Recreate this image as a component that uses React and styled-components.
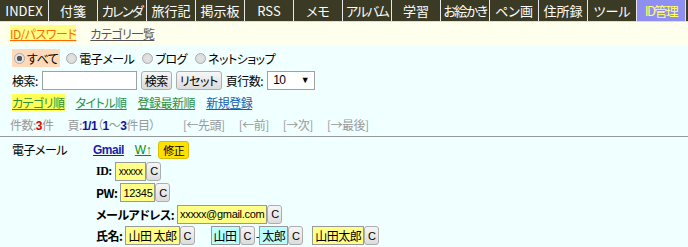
import styled, { createGlobalStyle } from "styled-components";

const GlobalStyle = createGlobalStyle`
  body {
    margin: 0;
    background: #f0ffff;
    font-family: "Noto Sans CJK JP", "Liberation Sans", sans-serif;
    font-size: 12px;
    font-feature-settings: "palt";
    letter-spacing: -0.5px;
    color: #000;
  }
`;

const Nav = styled.div`
  display: flex;
  height: 21px;
  background: #3b3b25;
  border-bottom: 1px solid #ddd;
`;
const Tab = styled.div`
  width: 48px;
  flex: none;
  border-right: 1px solid #e8e8e8;
  color: ${(p) => (p.active ? "#ffff66" : "#fff")};
  background: ${(p) => (p.active ? "#8f8ff2" : "transparent")};
  font-size: 13px;
  line-height: 21px;
  letter-spacing: ${(p) => (p.long ? "-1.6px" : "0")};
  text-align: center;
  white-space: nowrap;
  overflow: hidden;
`;

const SubBar = styled.div`
  display: flex;
  align-items: center;
  gap: 14px;
  height: 23px;
  padding-left: 10px;
  background: #ffffee;
`;
const SubLink = styled.a`
  text-decoration: underline;
  color: ${(p) => (p.active ? "#ff6a00" : "#555")};
  background: ${(p) => (p.active ? "#ffff88" : "transparent")};
`;

const Content = styled.div`
  padding: 2px 0 0 12px;
`;
const Row = styled.div`
  display: flex;
  align-items: center;
  gap: ${(p) => p.gap || 4}px;
  height: 22px;
  white-space: nowrap;
`;
const RadioOpt = styled.label`
  display: flex;
  align-items: center;
  gap: 2px;
  height: 18px;
  padding-right: 2px;
  background: ${(p) => (p.checked ? "#ffd9b8" : "transparent")};
`;
const Radio = styled.span`
  width: 11px;
  height: 11px;
  margin-left: 2px;
  border-radius: 50%;
  border: 1px solid #aaa;
  background: radial-gradient(circle, ${(p) =>
    p.checked ? "#555 0 2.5px, #e4e4e4 3px" : "#e4e4e4 0, #d8d8d8 100%"});
  box-sizing: border-box;
`;
const TextInput = styled.span`
  display: inline-block;
  width: ${(p) => p.w}px;
  height: 19px;
  background: #fff;
  border: 1px solid #a0a0a0;
  box-sizing: border-box;
`;
const Button = styled.span`
  display: inline-flex;
  align-items: center;
  justify-content: center;
  height: 19px;
  padding: 0 ${(p) => p.pad ?? 3}px;
  border: 1px solid #adadad;
  border-radius: 3px;
  background: linear-gradient(#f6f6f6, #dcdcdc);
  box-sizing: border-box;
`;
const Select = styled.span`
  display: inline-flex;
  align-items: center;
  justify-content: space-between;
  width: 48px;
  height: 19px;
  padding: 0 5px;
  background: #fff;
  border: 1px solid #a0a0a0;
  box-sizing: border-box;
  font-family: "Liberation Sans", sans-serif;
  font-size: 12px;
  & small {
    font-size: 9px;
  }
`;
const SortLink = styled.a`
  text-decoration: underline;
  color: ${(p) => p.color};
  background: ${(p) => p.bg || "transparent"};
`;
const Count = styled.div`
  display: flex;
  align-items: center;
  gap: 14px;
  height: 22px;
  margin-left: -2px;
  color: #999;
`;
const Num = styled.b`
  color: ${(p) => p.color};
  font-family: "Liberation Sans", sans-serif;
`;
const Rule = styled.hr`
  margin: 1px 0 0 0;
  border: none;
  border-top: 1px solid #999;
`;

const Record = styled.div`
  display: flex;
  padding-top: 3px;
`;
const RecordLabel = styled.div`
  width: 81px;
  padding-left: 12px;
  line-height: 19px;
`;
const RecordBody = styled.div`
  display: flex;
  flex-direction: column;
  gap: 2.5px;
`;
const Field = styled.div`
  display: flex;
  align-items: center;
  height: 19px;
  padding-left: 3px;
  white-space: nowrap;
`;
const TopField = styled(Field)`
  padding-left: 0;
`;
const FieldLabel = styled.b`
  margin-right: 3px;
  font-family: ${(p) => (p.serif ? '"Liberation Serif", serif' : "inherit")};
`;
const Value = styled.span`
  display: inline-flex;
  align-items: center;
  height: 19px;
  padding: 0 ${(p) => p.pad ?? 2}px;
  background: ${(p) => (p.cyan ? "#b8ffff" : "#ffff88")};
  border: 1px solid #999;
  box-sizing: border-box;
  font-size: ${(p) => p.fs || 12}px;
  font-family: ${(p) =>
    p.latin ? '"Liberation Sans", sans-serif' : "inherit"};
  letter-spacing: ${(p) => (p.latin ? "-0.3px" : "-0.5px")};
`;
const CopyBtn = styled(Button)`
  width: 15px;
  padding: 0;
  margin-right: ${(p) => p.after || 0}px;
  font-family: "Liberation Sans", sans-serif;
  font-size: 11px;
`;
const Gmail = styled.a`
  color: #1c1ca8;
  font-weight: bold;
  text-decoration: underline;
  font-family: "Liberation Sans", sans-serif;
`;
const Up = styled.a`
  color: #0a8a0a;
  text-decoration: underline;
  margin-left: 11px;
  font-family: "Liberation Sans", sans-serif;
`;
const EditBtn = styled.span`
  display: inline-flex;
  align-items: center;
  height: 16px;
  margin-left: 7px;
  padding: 0 4px;
  background: #ffe100;
  border: 1px solid #d8bd00;
  border-radius: 3px;
  font-size: 11px;
`;

const tabs = [
  "INDEX", "付箋", "カレンダ", "旅行記", "掲示板", "RSS", "メモ",
  "アルバム", "学習", "お絵かき", "ペン画", "住所録", "ツール", "ID管理",
];

export default function App() {
  return (
    <>
      <GlobalStyle />
      <Nav>
        {tabs.map((t) => (
          <Tab key={t} active={t === "ID管理"} long={t.length >= 4 && t !== "INDEX"}>
            {t}
          </Tab>
        ))}
      </Nav>
      <SubBar>
        <SubLink active>ID/パスワード</SubLink>
        <SubLink>カテゴリ一覧</SubLink>
      </SubBar>
      <Content>
        <Row gap={4}>
          <RadioOpt checked><Radio checked />すべて</RadioOpt>
          <RadioOpt><Radio />電子メール</RadioOpt>
          <RadioOpt><Radio />ブログ</RadioOpt>
          <RadioOpt><Radio />ネットショップ</RadioOpt>
        </Row>
        <Row gap={4}>
          <span>検索:</span>
          <TextInput w={95} />
          <Button>検索</Button>
          <Button>リセット</Button>
          <span>頁行数:</span>
          <Select>10<small>▼</small></Select>
        </Row>
        <Row gap={11}>
          <SortLink color="#2f8f3f" bg="#ffff55">カテゴリ順</SortLink>
          <SortLink color="#2f8f3f">タイトル順</SortLink>
          <SortLink color="#2f8f3f">登録最新順</SortLink>
          <SortLink color="#1060b0">新規登録</SortLink>
        </Row>
        <Count>
          <span>件数:<Num color="#e00000">3</Num>件</span>
          <span>
            頁:<Num color="#1010a0">1/1</Num>（<Num color="#1010a0">1</Num>～<Num color="#1010a0">3</Num>件目）
          </span>
          <span style={{ marginLeft: 14 }}>[←先頭]</span>
          <span>[←前]</span>
          <span>[→次]</span>
          <span>[→最後]</span>
        </Count>
      </Content>
      <Rule />
      <Record>
        <RecordLabel>電子メール</RecordLabel>
        <RecordBody>
          <TopField>
            <Gmail>Gmail</Gmail>
            <Up>W↑</Up>
            <EditBtn>修正</EditBtn>
          </TopField>
          <Field>
            <FieldLabel serif>ID:</FieldLabel>
            <Value latin fs={10} pad={3}>xxxxx</Value>
            <CopyBtn>C</CopyBtn>
          </Field>
          <Field>
            <FieldLabel>PW:</FieldLabel>
            <Value latin fs={11}>12345</Value>
            <CopyBtn>C</CopyBtn>
          </Field>
          <Field>
            <FieldLabel>メールアドレス:</FieldLabel>
            <Value latin fs={11}>xxxxx@gmail.com</Value>
            <CopyBtn>C</CopyBtn>
          </Field>
          <Field>
            <FieldLabel>氏名:</FieldLabel>
            <Value>山田 太郎</Value>
            <CopyBtn after={16}>C</CopyBtn>
            <Value cyan>山田</Value>
            <CopyBtn after={1}>C</CopyBtn>
            <span>-</span>
            <Value cyan>太郎</Value>
            <CopyBtn after={9}>C</CopyBtn>
            <Value>山田太郎</Value>
            <CopyBtn>C</CopyBtn>
          </Field>
        </RecordBody>
      </Record>
    </>
  );
}
